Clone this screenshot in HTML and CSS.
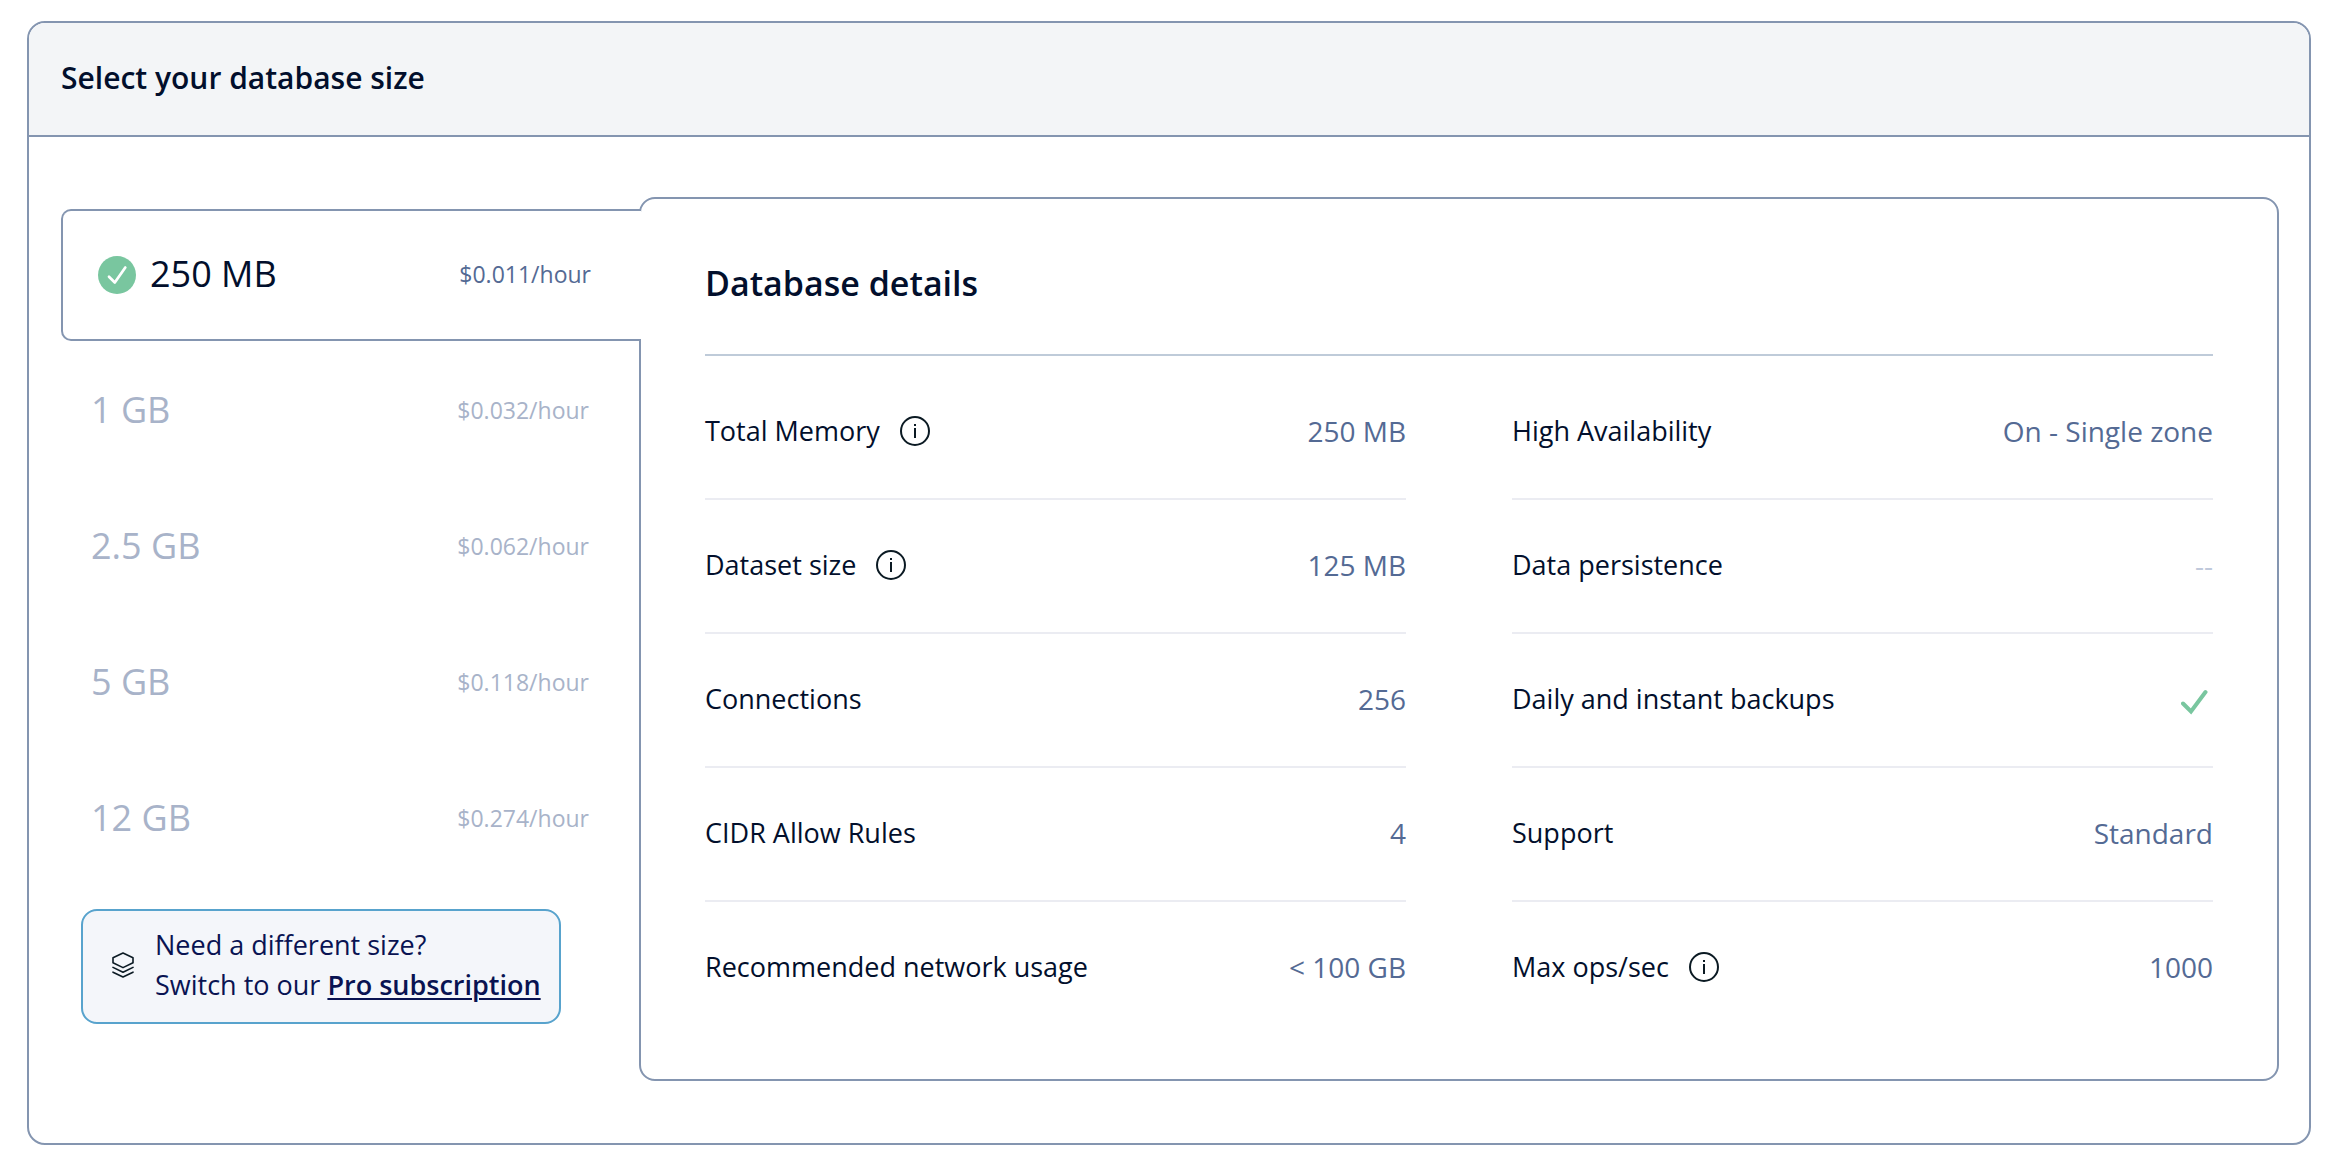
FILE: index.html
```html
<!DOCTYPE html>
<html lang="en">
<head>
<meta charset="utf-8">
<meta name="viewport" content="width=device-width, initial-scale=1">
<title>Select your database size</title>
<link rel="stylesheet" href="styles.css">
</head>
<body>
<svg class="sprite" aria-hidden="true">
  <symbol id="icon-info" viewBox="0 0 30 30">
    <circle cx="15" cy="15" r="14" fill="none" stroke="currentColor" stroke-width="2"/>
    <rect x="14" y="8" width="2" height="2" fill="currentColor"/>
    <rect x="14" y="12" width="2" height="10" fill="currentColor"/>
  </symbol>
</svg>
<main class="card">
  <header class="card-header">
    <h1 class="card-title">Select your database size</h1>
  </header>
  <div class="card-body">
    <div class="sidebar">
      <div class="sizes" role="tablist" aria-label="Database size">
        <button class="size size-selected" type="button" role="tab" aria-selected="true" aria-controls="details">
          <svg class="size-check" viewBox="0 0 38 38" aria-hidden="true">
            <circle cx="19" cy="19" r="19" fill="#79c69f"/>
            <path d="M11 20.7 L16.8 26.5 L27.3 11.5" fill="none" stroke="#fff" stroke-width="2.7" stroke-linecap="round" stroke-linejoin="round"/>
          </svg>
          <span class="size-name">250 MB</span>
          <span class="size-price">$0.011/hour</span>
        </button>
        <button class="size" type="button" role="tab" aria-selected="false">
          <span class="size-name">1 GB</span>
          <span class="size-price">$0.032/hour</span>
        </button>
        <button class="size" type="button" role="tab" aria-selected="false">
          <span class="size-name">2.5 GB</span>
          <span class="size-price">$0.062/hour</span>
        </button>
        <button class="size" type="button" role="tab" aria-selected="false">
          <span class="size-name">5 GB</span>
          <span class="size-price">$0.118/hour</span>
        </button>
        <button class="size" type="button" role="tab" aria-selected="false">
          <span class="size-name">12 GB</span>
          <span class="size-price">$0.274/hour</span>
        </button>
      </div>
      <aside class="callout">
        <svg class="callout-icon" viewBox="0 0 22 26" aria-hidden="true">
          <g fill="none" stroke="#0b1a23" stroke-width="1.6" stroke-linejoin="round" stroke-linecap="round">
            <path d="M11 1 L21 5.8 V10.8 L11 15.6 L1 10.8 V5.8 Z"/>
            <path d="M1 15.4 L11 20.2 L21 15.4"/>
            <path d="M1 20.2 L11 25 L21 20.2"/>
          </g>
        </svg>
        <p class="callout-text">Need a different size?<br>Switch to our <a class="callout-link" href="#pro">Pro subscription</a></p>
      </aside>
    </div>
    <section class="details" id="details" role="tabpanel" aria-labelledby="details-title">
      <h2 class="details-title" id="details-title">Database details</h2>
      <div class="details-columns">
        <dl class="specs">
          <div class="spec">
            <dt class="spec-name">Total Memory <button class="info" type="button" aria-label="About total memory"><svg class="info-icon" aria-hidden="true"><use href="#icon-info"/></svg></button></dt>
            <dd class="spec-value">250 MB</dd>
          </div>
          <div class="spec">
            <dt class="spec-name">Dataset size <button class="info" type="button" aria-label="About dataset size"><svg class="info-icon" aria-hidden="true"><use href="#icon-info"/></svg></button></dt>
            <dd class="spec-value">125 MB</dd>
          </div>
          <div class="spec">
            <dt class="spec-name">Connections</dt>
            <dd class="spec-value">256</dd>
          </div>
          <div class="spec">
            <dt class="spec-name">CIDR Allow Rules</dt>
            <dd class="spec-value">4</dd>
          </div>
          <div class="spec">
            <dt class="spec-name">Recommended network usage</dt>
            <dd class="spec-value">&lt; 100 GB</dd>
          </div>
        </dl>
        <dl class="specs">
          <div class="spec">
            <dt class="spec-name">High Availability</dt>
            <dd class="spec-value">On - Single zone</dd>
          </div>
          <div class="spec">
            <dt class="spec-name">Data persistence</dt>
            <dd class="spec-value spec-value-none">--</dd>
          </div>
          <div class="spec">
            <dt class="spec-name">Daily and instant backups</dt>
            <dd class="spec-value">
              <svg class="check" viewBox="0 0 32 32" role="img" aria-label="Included">
                <path d="M2 20.5 L10 28.5 L24.5 9" fill="none" stroke="#79c69f" stroke-width="4" stroke-linecap="round" stroke-linejoin="miter"/>
              </svg>
            </dd>
          </div>
          <div class="spec">
            <dt class="spec-name">Support</dt>
            <dd class="spec-value">Standard</dd>
          </div>
          <div class="spec">
            <dt class="spec-name">Max ops/sec <button class="info" type="button" aria-label="About max ops per second"><svg class="info-icon" aria-hidden="true"><use href="#icon-info"/></svg></button></dt>
            <dd class="spec-value">1000</dd>
          </div>
        </dl>
      </div>
    </section>
  </div>
</main>
</body>
</html>
```
FILE: styles.css
```css
:root {
  --line: #8495b0;
  --ink: #020f2c;
  --value: #546a94;
  --muted: #a8b3c9;
}

* { box-sizing: border-box; }

body {
  margin: 0;
  padding: 21px 21px 25px 27px;
  background: #fff;
  color: var(--ink);
  font: 400 27px/40px "Open Sans", "Noto Sans", sans-serif;
}

h1, h2, p, dl, dd { margin: 0; }

button {
  margin: 0;
  padding: 0;
  border: 0;
  background: none;
  color: inherit;
  font: inherit;
  cursor: pointer;
}

.sprite {
  position: absolute;
  width: 0;
  height: 0;
}

.card {
  border: 2px solid var(--line);
  border-radius: 18px;
  overflow: hidden;
}

.card-header {
  padding: 35px 32px 37px;
  border-bottom: 2px solid var(--line);
  background: #f3f5f7;
}

.card-title {
  font-size: 30px;
  font-weight: 600;
}

.card-body {
  display: grid;
  grid-template-columns: 578px 1fr;
  padding: 60px 30px 62px 32px;
}

.sidebar { padding-top: 12px; }

.sizes {
  display: flex;
  flex-direction: column;
  gap: 4px;
}

.size {
  display: flex;
  align-items: center;
  gap: 14px;
  height: 132px;
  padding: 0 50px 0 30px;
  color: var(--muted);
}

/* The selected tab lies over the panel's left border, so the two join. */
.size-selected {
  position: relative;
  z-index: 1;
  margin-right: -2px;
  padding-left: 35px;
  border: 2px solid var(--line);
  border-right: 0;
  border-radius: 10px 0 0 10px;
  background: #fff;
  color: var(--ink);
}

.size-check {
  width: 38px;
  height: 38px;
}

.size-name {
  padding-bottom: 3px;
  font-size: 36px;
}

.size-price {
  margin-left: auto;
  padding-bottom: 3px;
  font-size: 23px;
}

.size-selected .size-price { color: var(--value); }

.callout {
  display: flex;
  align-items: center;
  gap: 21px;
  width: fit-content;
  margin: 24px 0 0 20px;
  padding: 14px 18px 17px 29px;
  border: 2px solid #58a3cd;
  border-radius: 16px;
  background: #f4f6fa;
  color: #091352;
}

.callout-icon {
  flex: none;
  width: 22px;
  height: 26px;
}

.callout-link {
  color: inherit;
  font-weight: 600;
  text-decoration-thickness: 2px;
  text-underline-offset: 3px;
}

.details {
  padding: 0 64px 45px;
  border: 2px solid var(--line);
  border-radius: 16px;
}

.details-title {
  padding: 64px 0 51px;
  border-bottom: 2px solid #bfcbd9;
  font-size: 34px;
  font-weight: 600;
}

.details-columns {
  display: grid;
  grid-template-columns: 1fr 1fr;
  gap: 106px;
  padding-top: 10px;
}

.spec {
  display: flex;
  align-items: center;
  justify-content: space-between;
  height: 134px;
  padding-bottom: 2px;
  border-bottom: 2px solid #ebecf2;
}

.spec:last-child {
  height: 132px;
  border-bottom: 0;
}

.spec-name {
  display: flex;
  align-items: center;
  gap: 20px;
}

.spec-value {
  color: var(--value);
  font-size: 28px;
}

.spec-value-none { color: #c0c9db; }

.info, .info-icon, .check { display: block; }

.info { color: #0b1a23; }

.info-icon {
  width: 30px;
  height: 30px;
}

.check {
  width: 32px;
  height: 32px;
}
```
